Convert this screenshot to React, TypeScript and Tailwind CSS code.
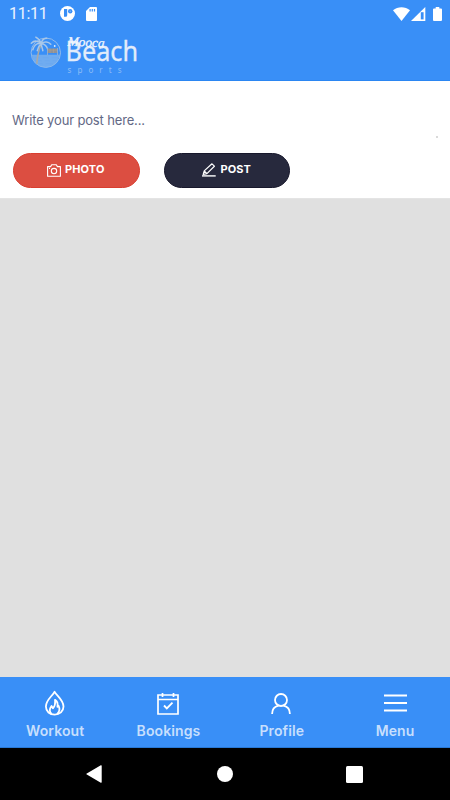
import * as React from "react";

const StatusBar: React.FC = () => {
  return (
    <div className="flex h-[27px] items-center pl-[9px] pr-2 text-white">
      <span className="w-[51px] font-[Roboto,sans-serif] text-[16px] leading-none tracking-[-0.3px] text-white/90">
        11:11
      </span>
      <svg width="15" height="15" viewBox="0 0 15 15">
        <circle cx="7.5" cy="7.5" r="7.5" fill="#fff" />
        <path d="M4 3h3.200v6.200a1.500 1.500 0 0 1-1.500 1.500H4z" fill="#398ff7" />
        <circle cx="10.2" cy="5.2" r="2.200" fill="#398ff7" />
        <circle cx="10.2" cy="5.2" r=".6" fill="#9cc7fb" />
      </svg>
      <svg className="ml-[11px]" width="11" height="14" viewBox="0 0 11 14">
        <path d="M4 0h6a1 1 0 0 1 1 1v12a1 1 0 0 1-1 1H1a1 1 0 0 1-1-1V4z" fill="#fff" />
        <path d="M4.1 2v2.5M6.3 2v2.5M8.5 2v2.5" stroke="#398ff7" strokeWidth="1.2" />
      </svg>
      <svg className="ml-auto" width="17" height="14" viewBox="0 0 17 14">
        <path d="M0 3.2C4.8-.9 12.2-.9 17 3.2L8.5 14z" fill="#fff" />
      </svg>
      <svg className="ml-px" width="15" height="14" viewBox="0 0 15 14">
        <path d="M0 14 14.3 0v14z" fill="#fff" />
        <path d="M9.800 5.200h2.800v7.200H9.800z" fill="#398ff7" />
      </svg>
      <svg className="ml-[7px]" width="9" height="14" viewBox="0 0 9 14">
        <path d="M2.7 0h3.6v1.5H8q1 0 1 1V13q0 1-1 1H1q-1 0-1-1V2.5q0-1 1-1h1.7z" fill="#fff" />
      </svg>
    </div>
  );
};

const Logo: React.FC = () => {
  return (
    <svg className="overflow-visible" width="112" height="44" viewBox="0 0 112 44">
      <g fill="none" stroke="#9dbfe6" transform="translate(.8 .7)">
        <circle cx="16" cy="19" r="14.7" strokeWidth=".9" />
        <path d="M4 27.5A14.7 14.7 0 0 0 28 27.5L30 21H2z" fill="#83b5ee" stroke="none" opacity=".75" />
        <path d="M5 24h5m3 0h6m3 0h6M5 27h7m3 0h5m3 0h4M9 30h4m3 0h7" stroke="#6aa8ef" strokeWidth=".8" />
        <path d="M11.5 10C9 16 7.5 22 7 30" stroke="#a9a9a6" strokeWidth="1.6" />
        <path
          d="M11.5 10C8 7 4.5 6.5 1.5 9.5M11.5 10C7 9 4 12 3 16M11.5 10C10 6 8 4.5 6 3.5M11.5 10C12 6 14 4.5 17 4.5M11.5 10c3-2.5 7-2 9.5.5M11.5 10c4 0 5.5 3 6.5 5.5M11.5 10C9 12 8 14 7.5 17M11.5 10c0 3 1.5 5 1.5 7"
          stroke="#a8c7e9"
          strokeWidth="1.5"
          strokeLinecap="round"
        />
      </g>
      <path d="M18.5 15.5h9.5v4.5h-9.5z" fill="#8e9199" />
      <path d="M18.5 17h9.5M21 15.5v4.5M24.5 15.5v4.5" stroke="#b6a78b" strokeWidth=".5" />
      <path d="M18.5 15v7M28.5 15v7" stroke="#a0b4cb" strokeWidth=".8" />
      <circle cx="25.7" cy="13" r=".9" fill="#e3edf9" />
      <text
        x="36.5"
        y="28"
        textLength="72.5"
        lengthAdjust="spacingAndGlyphs"
        fill="#e2ecfa"
        stroke="#e2ecfa"
        strokeWidth=".3"
        fontSize="27"
        fontFamily="'Noto Sans', 'Open Sans', sans-serif"
      >
        Beach
      </text>
      <text
        x="38.5"
        y="12.5"
        textLength="37"
        lengthAdjust="spacingAndGlyphs"
        fill="#f2f7fe"
        stroke="#f2f7fe"
        strokeWidth=".3"
        fontSize="13"
        fontStyle="italic"
        fontFamily="'Liberation Serif', serif"
        transform="rotate(3 39 12)"
      >
        Mooca
      </text>
      <text
        x="38.5"
        y="40"
        textLength="54"
        fill="#8dbdf6"
        fontSize="8"
        fontFamily="'Noto Sans', sans-serif"
      >
        sports
      </text>
    </svg>
  );
};

const CameraIcon = () => (
  <svg width="14" height="13" viewBox="0 0 14 13" fill="none" stroke="#fff" strokeWidth="1.1">
    <path d="M.6 2.6h3L4.7.7h4.600l1.100 1.900h3v9.600H.6z" strokeLinejoin="round" />
    <circle cx="7" cy="7.1" r="2.7" />
    <path d="M2 4.4h1" />
  </svg>
);

const PenIcon = () => (
  <svg className="-mt-0.5" width="14" height="14" viewBox="0 0 14 14" fill="none" stroke="#fff" strokeWidth="1.2">
    <path d="m1.2 11.5 1-3.6L10 .8l2.4 2.4-7.5 7.4zM2.3 8l2.6 2.6M1.2 11.5l3.7-.9" strokeLinejoin="round" />
    <path d="M0 12.9h13.7" strokeWidth="1.4" />
  </svg>
);

const FlameIcon = () => (
  <svg className="-mt-0.5" width="20" height="26" viewBox="0 0 20 26" fill="none" stroke="#fff" strokeWidth="1.8" strokeLinejoin="round">
    <path d="M9.5 1.800C7.500 6 .9 10 .9 16.500c0 5 3.900 8.200 8.800 8.200s8.800-3.300 8.800-8.200C18.500 10 12 6 9.500 1.800z" />
    <path d="M6.5 24c-2.300-2.300-1.900-5.500 0-8l1.400 2.300c2.500-2.500 2.500-5.300 2.100-8.500 2.600 1.800 3 4.500 2.400 7l1.200-.9c1.700 3.300.6 6.300-1.600 8.300" />
  </svg>
);

const CalendarIcon = () => (
  <svg className="ml-px" width="22" height="22" viewBox="0 0 22 22" fill="none" stroke="#fff" strokeWidth="1.7">
    <path d="M1 2h20v19H1zM1 6.5h20M5.5 0v4M16.5 0v4" />
    <path d="m7 12.5 2.8 2.9 5.700-5.700" strokeWidth="1.9" />
  </svg>
);

const ProfileIcon = () => (
  <svg width="20" height="22" viewBox="0 0 20 22" fill="none" stroke="#fff" strokeWidth="1.8">
    <circle cx="10" cy="7" r="6" />
    <path d="M1.1 21c0-4.600 2.700-7.500 6.300-8.300M12.600 12.700c3.600.8 6.300 3.700 6.300 8.300" />
  </svg>
);

const MenuIcon = () => (
  <svg className="-mt-0.5 ml-px" width="23" height="18" viewBox="0 0 23 18" stroke="#fff" strokeWidth="1.9">
    <path d="M0 1.5h23M0 9h23M0 16.5h23" />
  </svg>
);

type TabProps = { label: string };

const Tab: React.FC<TabProps & React.PropsWithChildren> = ({
  label,
  children,
}) => {
  return (
    <button className="flex w-[113.3px] shrink-0 flex-col items-center pt-3">
      <span className="flex h-[29px] items-center justify-center pr-px">{children}</span>
      <span className="mt-1 text-[14px] font-semibold leading-[17px] tracking-[0.1px] text-[#c7dffd]">
        {label}
      </span>
    </button>
  );
};

export default function App() {
  return (
    <div className="flex h-[800px] w-[450px] flex-col overflow-hidden bg-[#e0e0e0] font-[Inter,Roboto,sans-serif]">
      <header className="h-[81px] shrink-0 border-b border-[#2b86f2] bg-[#398ff7]">
        <StatusBar />
        <div className="pl-[29px] pt-[6px]">
          <Logo />
        </div>
      </header>

      <section className="h-[118px] shrink-0 border-b border-[#e4e4e4] bg-white px-[13px] pt-[30px]">
        <div className="flex h-[42px] justify-between">
          <p className="-ml-px text-[13px] leading-[18px] tracking-[-0.15px] text-[#626885]">
            Write your post here...
          </p>
          <span className="-mr-px mb-[15px] h-[2px] w-[2px] self-end bg-[#dadada]" />
        </div>
        <div className="flex gap-6 text-[11px] font-bold text-white">
          <button className="flex h-[35px] w-[126.5px] items-center justify-center gap-1 rounded-full border border-[#d93e30] bg-[#dc4e41] pr-px">
            <CameraIcon />
            <span className="pb-[2px] tracking-[0.15px]">PHOTO</span>
          </button>
          <button className="flex h-[35px] w-[126.5px] items-center justify-center gap-1 rounded-full border border-[#18182c] bg-[#27293d]">
            <PenIcon />
            <span className="pb-[2px] tracking-[0.1px]">POST</span>
          </button>
        </div>
      </section>

      <main className="flex-1" />

      <nav className="-ml-[1.5px] flex h-[71px] shrink-0 border-b border-[#2878d5] bg-[#398ff7]">
        <Tab label="Workout">
          <FlameIcon />
        </Tab>
        <Tab label="Bookings">
          <CalendarIcon />
        </Tab>
        <Tab label="Profile">
          <ProfileIcon />
        </Tab>
        <Tab label="Menu">
          <MenuIcon />
        </Tab>
      </nav>

      <div className="flex h-[52px] shrink-0 items-center bg-black pl-[86px]">
        <svg width="16" height="18" viewBox="0 0 16 18">
          <path d="M.8 8.4 14.8.3q.9-.4.9.6v16.2q0 1-.9.6L.8 9.6q-1-.6 0-1.2z" fill="#fff" />
        </svg>
        <span className="ml-[115px] h-4 w-4 rounded-full bg-white" />
        <span className="ml-[113px] h-[17px] w-[17px] rounded-[1.5px] bg-white" />
      </div>
    </div>
  );
}
